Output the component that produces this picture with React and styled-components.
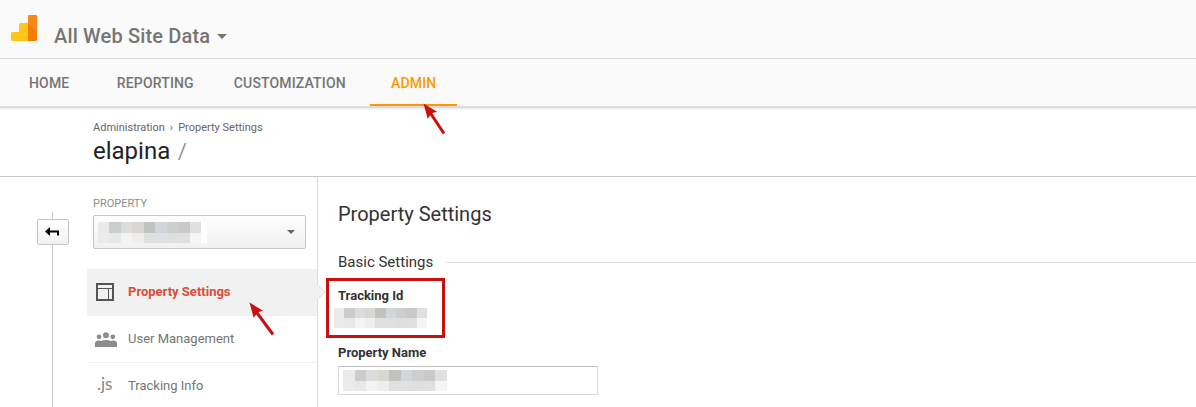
import React from 'react';
import styled, { createGlobalStyle } from 'styled-components';

const GlobalStyle = createGlobalStyle`
  * { box-sizing: border-box; }
  body { margin: 0; background: #fff; font-family: Roboto, "Liberation Sans", sans-serif; }
`;

const Page = styled.div`
  position: relative;
  display: flex;
  flex-direction: column;
  width: 1196px;
  height: 407px;
  overflow: hidden;
  background: #fff;
`;

const TopBar = styled.header`
  display: flex;
  height: 59px;
  flex: none;
  padding: 15px 0 0 11px;
  background: #fafafa;
  border-bottom: 1px solid #dcdcdc;
`;

const ViewPicker = styled.div`
  display: flex;
  align-items: center;
  height: 24px;
  margin: 9px 0 0 17px;
  gap: 7px;
  color: #757575;
  font-size: 20px;
  font-weight: 500;
  letter-spacing: 0.16px;
  line-height: 24px;
  white-space: nowrap;
`;

const Caret = styled.i`
  border: ${(p) => p.$size}px solid transparent;
  border-top-color: ${(p) => p.$color};
  border-bottom: 0;
`;

const NavBar = styled.nav`
  display: flex;
  flex: none;
  height: 49px;
  padding-left: 8px;
  background: #fafafa;
  border-bottom: 2px solid #dcdcdc;
  box-shadow: 0 1px 2px rgba(0, 0, 0, 0.1);
`;

const NavTab = styled.a`
  height: 47px;
  padding: 0 21px;
  margin-right: ${(p) => p.$gap || 0}px;
  border-bottom: 2px solid ${(p) => (p.$active ? '#ff9800' : 'transparent')};
  color: ${(p) => (p.$active ? '#ff9800' : '#757575')};
  font-size: 14px;
  font-weight: 500;
  letter-spacing: 0.15px;
  line-height: 48px;
  white-space: nowrap;
`;

const TitleBar = styled.section`
  flex: none;
  height: 69px;
  padding: 13px 0 0 93px;
  border-bottom: 1px solid #c8c8c8;
`;

const Breadcrumb = styled.div`
  display: flex;
  gap: 5px;
  color: #666;
  font-size: 11px;
  line-height: 14px;
`;

const AccountName = styled.h1`
  margin: 2px 0 0;
  color: #222;
  font-size: 24px;
  font-weight: 400;
  line-height: 28px;
  span { margin-left: 1.5px; color: #999; font-size: 22px; }
`;

const Body = styled.div`
  display: flex;
  flex: 1;
`;

const Rail = styled.div`
  display: flex;
  flex-direction: column;
  align-items: center;
  width: 32px;
  margin: 35px 18px 0 37px;
`;

const RailLine = styled.div`
  width: 1px;
  height: ${(p) => p.$height || 'auto'};
  flex: ${(p) => (p.$height ? 'none' : 1)};
  margin-right: 1px;
  background: #c8c8c8;
`;

const BackButton = styled.button`
  display: flex;
  align-items: center;
  justify-content: center;
  width: 32px;
  height: 26px;
  padding: 0 2px 1px 0;
  border: 1px solid #c6c6c6;
  border-radius: 2px;
  background: linear-gradient(#fff, #f1f1f1);
`;

const Sidebar = styled.aside`
  width: 231px;
  border-right: 1px solid #dadada;
`;

const SideLabel = styled.div`
  margin: 20px 0 0 6px;
  color: #8d8d8d;
  font-size: 11px;
  line-height: 14px;
`;

const Select = styled.div`
  display: flex;
  align-items: center;
  justify-content: space-between;
  width: 213px;
  height: 34px;
  margin: 4px 0 20px 6px;
  padding: 0 10px 0 4px;
  border: 1px solid #c6c6c6;
  border-radius: 2px;
  background: linear-gradient(#fdfdfd, #f1f1f1);
`;

const MaskWrap = styled.div`
  padding-right: ${(p) => p.$pad || 0}px;
  background: #fff;
  line-height: 0;
`;

const MenuItem = styled.a`
  position: relative;
  display: flex;
  align-items: center;
  height: 47px;
  padding-left: 7px;
  gap: 11px;
  border-bottom: 1px solid #f0f0f0;
  background: ${(p) => (p.$active ? '#f1f1f1' : '#fff')};
  color: ${(p) => (p.$active ? '#dd4b39' : '#757575')};
  font-size: 13px;
  font-weight: ${(p) => (p.$active ? 700 : 400)};
  svg { flex: none; }
`;

const ItemText = styled.span`
  padding-bottom: 2px;
`;

const Pointer = styled.svg`
  position: absolute;
  left: 230px;
  top: 15px;
`;

const JsGlyph = styled.span`
  width: 23px;
  padding: 0 0 5px 3px;
  color: #858585;
  font-family: Lato, "Open Sans", sans-serif;
  font-size: 17px;
`;

const Main = styled.main`
  flex: 1;
  padding: 25px 0 0 20px;
  color: #333;
`;

const PageTitle = styled.h2`
  margin: 0;
  font-size: 20px;
  font-weight: 400;
  line-height: 24px;
`;

const SectionTitle = styled.h3`
  display: flex;
  align-items: center;
  gap: 13px;
  margin: 26px 0 0;
  font-size: 15px;
  font-weight: 400;
  line-height: 20px;
  &::after { content: ''; flex: 1; height: 1px; margin-top: 1px; background: #dedede; }
`;

const Highlight = styled.div`
  width: 119px;
  height: 60px;
  margin: 6px 0 0 -12px;
  padding: 7px 0 0 5px;
  border: 3px solid #c90f0f;
`;

const FieldLabel = styled.div`
  margin: ${(p) => p.$margin};
  font-size: 13px;
  font-weight: 700;
  line-height: 16px;
`;

const TextField = styled.div`
  width: 260px;
  height: 29px;
  margin-top: 5px;
  padding: 3px 0 0 4px;
  border: 1px solid #d9d9d9;
  border-top-color: #c0c0c0;
  line-height: 0;
`;

const Arrow = styled.svg`
  position: absolute;
  left: ${(p) => p.$x}px;
  top: ${(p) => p.$y}px;
`;

const MASK_ROWS = [
  ['#ebeae8', '#cbccce', '#dcdcdc', '#d8d7d2', '#c1c3c1', '#d2d6da', '#cdced0', '#c9c9c9', '#e0e0e0'],
  ['#edebea', '#e6e8ea', '#f3f5f4', '#f0edec', '#e0e0e1', '#dfe0e3', '#dfdfe0', '#e0e0e0', '#f5f5f5'],
];

function Mask({ width, height }) {
  return (
    <svg width={width} height={height} viewBox="0 0 9 2" preserveAspectRatio="none" shapeRendering="crispEdges">
      {MASK_ROWS.map((row, y) => row.map((c, x) => <rect key={`${x}-${y}`} x={x} y={y} width="1" height="1" fill={c} />))}
    </svg>
  );
}

function RedArrow({ x, y, endX, endY }) {
  return (
    <Arrow $x={x} $y={y} width="28" height="36" viewBox="0 0 28 36">
      <path d={`M7 9.5 ${endX} ${endY}`} stroke="#c90f0f" strokeWidth="3" />
      <path d="M0.5 0.5 14 8.7 8.8 10.3 4.7 15.7Z" fill="#c90f0f" />
    </Arrow>
  );
}

function Logo() {
  return (
    <svg width="26" height="27" viewBox="0 0 26 27">
      <path d="M0 18.5Q0 17 1.5 17H8V9.5Q8 8 9.5 8H17V26H1.5Q0 26 0 24.5Z" fill="#ffc517" />
      <path d="M17 1.5Q17 0 18.5 0H24.5Q26 0 26 1.5V24.5Q26 26 24.5 26H17Z" fill="#f57c00" />
      <path d="M17 1.5Q17 0 18.5 0H24.5Q26 0 26 1.5V17L17 8Z" fill="#f8871a" />
    </svg>
  );
}

export default function App() {
  return (
    <>
      <GlobalStyle />
      <Page>
        <TopBar>
          <Logo />
          <ViewPicker>All Web Site Data <Caret $size={5} $color="#757575" /></ViewPicker>
        </TopBar>
        <NavBar>
          <NavTab $gap={5.5}>HOME</NavTab>
          <NavTab $gap={-2}>REPORTING</NavTab>
          <NavTab $gap={3.3}>CUSTOMIZATION</NavTab>
          <NavTab $active>ADMIN</NavTab>
        </NavBar>
        <TitleBar>
          <Breadcrumb><span>Administration</span><span>›</span><span>Property Settings</span></Breadcrumb>
          <AccountName>elapina <span>/</span></AccountName>
        </TitleBar>
        <Body>
          <Rail>
            <RailLine $height="7px" />
            <BackButton aria-label="Back">
              <svg width="14" height="10" viewBox="0 0 14 10">
                <path d="M0 4.5 5 0V3.5H14V8.5H12V5.5H5V9Z" fill="#000" />
              </svg>
            </BackButton>
            <RailLine />
          </Rail>
          <Sidebar>
            <SideLabel>PROPERTY</SideLabel>
            <Select>
              <MaskWrap $pad={6}><Mask width={103} height={21} /></MaskWrap>
              <Caret $size={4} $color="#666" />
            </Select>
            <MenuItem $active>
              <svg width="23" height="20" viewBox="0 0 23 20">
                <path d="M3 2H19V18H3Z" fill="none" stroke="#555" strokeWidth="2" />
                <path d="M4 6.5H18M14.5 7V17" stroke="#555" strokeWidth="1" />
              </svg>
              <ItemText>Property Settings</ItemText>
              <Pointer width="9" height="16" viewBox="0 0 9 16">
                <path d="M0 0 8 8 0 16Z" fill="#f1f1f1" />
                <path d="M0.5 0.5 8 8 0.5 15.5" fill="none" stroke="#dedede" />
              </Pointer>
            </MenuItem>
            <MenuItem>
              <svg width="23" height="16" viewBox="0 -1 23 16" fill="#8c8c8c">
                <circle cx="5" cy="4.8" r="2.4" />
                <circle cx="12" cy="3.2" r="3" />
                <circle cx="18.8" cy="4.8" r="2.4" />
                <path d="M1 15V11.5Q1 8.5 5 8.5L7.5 9Q9 8 12 8T16.5 9L19 8.5Q23 8.5 23 11.5V15Z" />
              </svg>
              <ItemText>User Management</ItemText>
            </MenuItem>
            <MenuItem>
              <JsGlyph>.js</JsGlyph>
              <ItemText>Tracking Info</ItemText>
            </MenuItem>
          </Sidebar>
          <Main>
            <PageTitle>Property Settings</PageTitle>
            <SectionTitle>Basic Settings</SectionTitle>
            <Highlight>
              <FieldLabel $margin="0 0 4px 4px">Tracking Id</FieldLabel>
              <Mask width={93} height={20} />
            </Highlight>
            <FieldLabel $margin="7px 0 0">Property Name</FieldLabel>
            <TextField><Mask width={104} height={21} /></TextField>
          </Main>
        </Body>
        <RedArrow x={423} y={103} endX={21} endY={30.5} />
        <RedArrow x={249} y={302} endX={24} endY={32.5} />
      </Page>
    </>
  );
}
